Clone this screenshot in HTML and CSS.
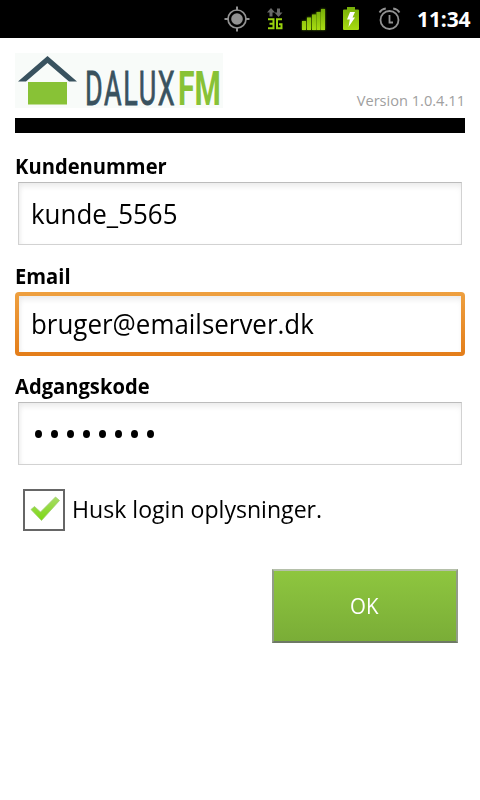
FILE: index.html
```html
<!DOCTYPE html>
<html lang="da">
<head>
<meta charset="utf-8">
<title>Dalux FM</title>
<link rel="stylesheet" href="styles.css">
</head>
<body>
<header class="statusbar">
  <svg class="status-icons" width="190" height="38" viewBox="215 0 190 38">
    <defs>
      <linearGradient id="lime" x1="0" y1="0" x2="0" y2="1"><stop offset="0" stop-color="#76ae08"/><stop offset="1" stop-color="#a8dc12"/></linearGradient>
      <filter id="glow" x="-30%" y="-30%" width="160%" height="160%"><feGaussianBlur stdDeviation="1.3"/></filter>
    </defs>
    <g fill="none" stroke="#929292" stroke-width="1.7">
      <circle cx="237" cy="19" r="9"/>
      <path d="M237 6.500v4M237 27.500v4M224.500 19h4M245.500 19h4" stroke-width="2"/>
      <circle cx="237" cy="19" r="5.800" fill="#929292" stroke="none"/>
    </g>
    <path d="M271 8l4 4.500h-2.500v4h-3v-4h-2.500zM278.500 17l-4-4.500h2.500v-4h3v4h2.500z" fill="#686868"/>
    <path d="M268 19.200h5.500v9H268M269.500 23.700h4M282 19.200h-5v9h4.500v-4h-2.500" fill="none" stroke="#9ad20d" stroke-width="2"/>
    <path d="M302 21h4v9h-4zM307 17.500h4V30h-4zM312 14.500h4V30h-4zM316.500 12h4v18h-4zM321 9h4v21h-4z" fill="#619306" filter="url(#glow)"/>
    <path d="M302 21h4v9h-4zM307 17.500h4V30h-4zM312 14.500h4V30h-4zM316.500 12h4v18h-4zM321 9h4v21h-4z" fill="url(#lime)"/>
    <path d="M347 7h8v2.500h3a1 1 0 0 1 1 1V29a1 1 0 0 1-1 1h-14a1 1 0 0 1-1-1V10.500a1 1 0 0 1 1-1h3z" fill="url(#lime)"/>
    <path d="M350 12h5l-2.500 5.500h2.500L348.500 27l1.300-7.500h-2.800z" fill="#fff"/>
    <g fill="none" stroke="#929292" stroke-width="1.800">
      <circle cx="389.500" cy="20" r="9"/>
      <path d="M389.500 15v7.500h3.500M379.500 12.500q2-3.500 6.300-4M399.500 12.500q-2-3.500-6.300-4"/>
    </g>
  </svg>
  <time class="clock">11:34</time>
</header>
<main class="screen">
  <div class="brand">
    <svg class="logo" width="208" height="55" viewBox="15 53 208 55">
      <rect x="15" y="53" width="208" height="55" fill="#f8fbf9"/>
      <path d="M18 81.500L47.500 56 77 81.500H69L47.500 63 26 81.500z" fill="#39525f"/>
      <path d="M28 82h39v22.500H28z" fill="#88c236"/>
      <text class="logo-name" transform="translate(85 104.500) scale(.55 1)">DALUX</text>
      <text class="logo-suffix" transform="translate(178 104.500) scale(.615 1)">FM</text>
    </svg>
    <span class="version">Version 1.0.4.11</span>
  </div>
  <div class="rule"></div>
  <form class="login">
    <div class="row"><div class="label"><span>Kundenummer</span></div><div class="field"><span class="value">kunde_5565</span></div></div>
    <div class="row"><div class="label"><span>Email</span></div><div class="field focused"><span class="value">bruger@emailserver.dk</span></div></div>
    <div class="row"><div class="label"><span>Adgangskode</span></div><div class="field"><span class="dots"><i></i><i></i><i></i><i></i><i></i><i></i><i></i><i></i></span></div></div>
    <div class="remember">
      <span class="checkbox"><svg width="38" height="38" viewBox="25 491 38 38">
        <defs><linearGradient id="tick" x1="0" y1="0" x2="0" y2="1"><stop offset="0" stop-color="#a9dc68"/><stop offset="1" stop-color="#7bd810"/></linearGradient></defs>
        <path d="M31 509.500l3.500-3 6 5.500L55.500 497l4 3.500L41.500 520.500z" fill="url(#tick)" stroke="#9fce70" stroke-width=".8" stroke-linejoin="round"/>
      </svg></span>
      <span class="remember-text">Husk login oplysninger.</span>
    </div>
    <div class="ok"><span>OK</span></div>
  </form>
</main>
</body>
</html>
```
FILE: styles.css
```css
* { box-sizing: border-box; }
body {
  margin: 0;
  width: 480px;
  height: 800px;
  overflow: hidden;
  background: #fff;
  color: #000;
  font-family: "Open Sans", "Noto Sans", sans-serif;
}
span, time { white-space: nowrap; }
.statusbar {
  display: flex;
  height: 38px;
  padding-left: 215px;
  background: #000;
}
.clock {
  margin-left: 12px;
  color: #fff;
  font-size: 21px;
  font-weight: 700;
  line-height: 38px;
  letter-spacing: -.1px;
}
.screen { padding: 15px 15px 0; }
.brand {
  display: flex;
  justify-content: space-between;
  align-items: flex-end;
  height: 55px;
}
.logo { overflow: visible; }
.logo-name, .logo-suffix { font-family: Roboto, sans-serif; font-size: 49px; }
.logo-name { fill: #39525f; stroke: #39525f; stroke-width: .9px; letter-spacing: 3px; }
.logo-suffix { fill: #88c236; font-weight: 700; }
.version {
  color: #a0a0a0;
  font-size: 14.6px;
  line-height: 15px;
}
.rule { height: 15px; margin-top: 10px; background: #000; }
.login { padding-top: 19px; }
.row { height: 110px; }
.label {
  height: 30px;
  font-size: 21px;
  font-weight: 700;
  line-height: 29px;
}
.label span, .value, .remember-text { display: inline-block; transform-origin: left; }
.label span { transform: scaleX(.96); }
.value { transform: scaleX(.926); line-height: 36px; margin-top: -2px; }
.field {
  display: flex;
  align-items: center;
  height: 63px;
  margin: 0 3px;
  padding-left: 12px;
  border: 1px solid #d2d2d2;
  border-top-color: #bcbcbc;
  box-shadow: inset 0 5px 6px -2px #e9e9e9, inset 3px 0 5px -2px #eee;
  font-size: 28px;
}
.focused {
  height: 64px;
  margin: 0;
  padding-left: 12px;
  border: 4px solid transparent;
  border-radius: 4px;
  background: linear-gradient(#fff, #fff) padding-box, linear-gradient(#eea040, #e37d19) border-box;
}
.field .dots { display: flex; gap: 9px; padding-left: 4px; }
.dots i { width: 7px; height: 8px; margin-top: 1px; border-radius: 50%; background: #000; }
.remember {
  display: flex;
  align-items: center;
  height: 42px;
  margin: 7px 0 0 8px;
}
.checkbox { display: flex; width: 42px; height: 42px; border: 2px solid #666; }
.remember-text { margin: -3px 0 0 7px; font-size: 24px; transform: scaleX(.962); }
.ok {
  display: flex;
  align-items: center;
  justify-content: center;
  width: 186px;
  height: 74px;
  margin: 38px 7px 0 auto;
  padding: 0 1px 3px 0;
  border: 2px solid;
  border-color: #b5c0aa #929c88 #6e7965 #929c88;
  background: linear-gradient(#8ec63f, #7aad37);
  color: #fff;
  font-size: 22px;
}
.ok span { transform: scaleX(.93); }
```
